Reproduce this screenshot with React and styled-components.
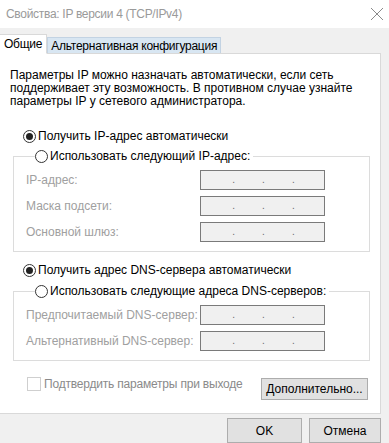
import React from 'react';
import styled, { createGlobalStyle } from 'styled-components';

const Global = createGlobalStyle`
  html, body {
    margin: 0;
    padding: 0;
    background: #f0f0f0;
  }
  body {
    font-family: 'Liberation Sans', Arial, sans-serif;
    font-size: 12px;
    color: #000;
  }
`;

const Window = styled.div`
  width: 389px;
  height: 443px;
  display: flex;
  flex-direction: column;
  overflow: hidden;
  background: #f0f0f0;
`;

const TitleBar = styled.div`
  height: 28px;
  flex: none;
  background: #fff;
  display: flex;
  align-items: center;
  justify-content: space-between;
  padding: 0 5px 0 6px;
  color: #9a9a9a;
  letter-spacing: -0.3px;
`;

const Close = styled.svg`
  width: 14px;
  height: 14px;
`;

const Tabs = styled.div`
  display: flex;
  align-items: flex-end;
  margin-top: 5px;
  height: 20px;
  position: relative;
  z-index: 1;
`;

const Tab = styled.div`
  display: flex;
  align-items: center;
  height: ${p => (p.$active ? '20px' : '16px')};
  padding: 0 ${p => (p.$active ? '4px' : '3px')};
  background: ${p => (p.$active ? '#fff' : '#d8e6f2')};
  border: 1px solid ${p => (p.$active ? '#d9d9d9' : '#c3d3e3')};
  border-left: ${p => (p.$active ? 'none' : undefined)};
  border-bottom: ${p => (p.$active ? '1px solid #fff' : 'none')};
  margin-bottom: ${p => (p.$active ? '-1px' : '0')};
  box-sizing: border-box;
  white-space: nowrap;
  letter-spacing: -0.25px;
`;

const Panel = styled.div`
  width: 381px;
  height: 361px;
  box-sizing: border-box;
  background: #fff;
  border: 1px solid #d9d9d9;
  border-left: none;
  padding: 15px 0 0 10px;
  display: flex;
  flex-direction: column;
`;

const Intro = styled.p`
  margin: 0;
  line-height: 13px;
  width: 345px;
`;

const Radio = styled.label`
  display: flex;
  align-items: center;
  height: 16px;
  gap: 2px;
  background: #fff;
  padding-right: 3px;
  white-space: nowrap;
`;

const Dot = styled.span`
  width: 11px;
  height: 11px;
  border: 1px solid #333;
  border-radius: 50%;
  display: flex;
  align-items: center;
  justify-content: center;
  &::after {
    content: '';
    width: 7px;
    height: 7px;
    border-radius: 50%;
    background: ${p => (p.$on ? '#222' : 'transparent')};
  }
`;

const AutoRadio = styled.div`
  margin: ${p => p.$top}px 0 0 13px;
`;

const Group = styled.fieldset`
  margin: ${p => p.$top}px 0 0 3px;
  width: 357px;
  box-sizing: border-box;
  border: 1px solid #dcdcdc;
  padding: 6px 0 9px 12px;
  display: flex;
  flex-direction: column;
  gap: 6px;
`;

const Legend = styled.legend`
  padding: 0;
  margin-left: 9px;
`;

const Field = styled.div`
  display: grid;
  grid-template-columns: 174px 125px;
  align-items: center;
  color: #a0a0a0;
  white-space: nowrap;
`;

const IpBox = styled.div`
  height: 20px;
  box-sizing: border-box;
  background: #f0f0f0;
  border: 1px solid #7a7a7a;
  display: flex;
  justify-content: center;
  align-items: flex-end;
  gap: 27px;
  padding: 0 0 4px 2px;
  color: #6a6a6a;
  font-size: 10px;
  line-height: 10px;
`;

const Footer = styled.div`
  margin: 16px 0 0 17px;
  display: flex;
  align-items: flex-start;
  justify-content: space-between;
  width: 341px;
`;

const Check = styled.label`
  display: flex;
  align-items: center;
  gap: 3px;
  height: 13px;
  color: #8a8a8a;
  letter-spacing: -0.2px;
`;

const Box = styled.span`
  width: 12px;
  height: 12px;
  border: 1px solid #cfcfcf;
  background: #fff;
`;

const Button = styled.button`
  font: inherit;
  color: #000;
  background: #e1e1e1;
  border: 1px solid #adadad;
  height: ${p => p.$h || 23}px;
  width: ${p => p.$w}px;
  margin: ${p => p.$mt || 0}px 0 0 0;
  padding: 0;
`;

const Actions = styled.div`
  display: flex;
  justify-content: flex-end;
  gap: 7px;
  padding: 4px 8px 0 0;
`;

const IpField = ({ label }) => (
  <Field>
    <span>{label}</span>
    <IpBox>
      <span>.</span>
      <span>.</span>
      <span>.</span>
    </IpBox>
  </Field>
);

const RadioLabel = ({ on, children }) => (
  <Radio>
    <Dot $on={on} />
    {children}
  </Radio>
);

export default function App() {
  return (
    <Window>
      <Global />
      <TitleBar>
        <span>Свойства: IP версии 4 (TCP/IPv4)</span>
        <Close viewBox="0 0 14 14">
          <path d="M1 1L13 13M13 1L1 13" stroke="#8a8a8a" strokeWidth="1" fill="none" />
        </Close>
      </TitleBar>
      <Tabs>
        <Tab $active>Общие</Tab>
        <Tab>Альтернативная конфигурация</Tab>
      </Tabs>
      <Panel>
        <Intro>
          Параметры IP можно назначать автоматически, если сеть
          <br />
          поддерживает эту возможность. В противном случае узнайте
          <br />
          параметры IP у сетевого администратора.
        </Intro>
        <AutoRadio $top={20}>
          <RadioLabel on>Получить IP-адрес автоматически</RadioLabel>
        </AutoRadio>
        <Group $top={4}>
          <Legend>
            <RadioLabel>Использовать следующий IP-адрес:</RadioLabel>
          </Legend>
          <IpField label="IP-адрес:" />
          <IpField label="Маска подсети:" />
          <IpField label="Основной шлюз:" />
        </Group>
        <AutoRadio $top={10}>
          <RadioLabel on>Получить адрес DNS-сервера автоматически</RadioLabel>
        </AutoRadio>
        <Group $top={5}>
          <Legend>
            <RadioLabel>Использовать следующие адреса DNS-серверов:</RadioLabel>
          </Legend>
          <IpField label="Предпочитаемый DNS-сервер:" />
          <IpField label="Альтернативный DNS-сервер:" />
        </Group>
        <Footer>
          <Check>
            <Box />
            Подтвердить параметры при выходе
          </Check>
          <Button $w={107} $h={22} $mt={1}>Дополнительно...</Button>
        </Footer>
      </Panel>
      <Actions>
        <Button $w={75} $h={25}>OK</Button>
        <Button $w={72} $h={25}>Отмена</Button>
      </Actions>
    </Window>
  );
}
